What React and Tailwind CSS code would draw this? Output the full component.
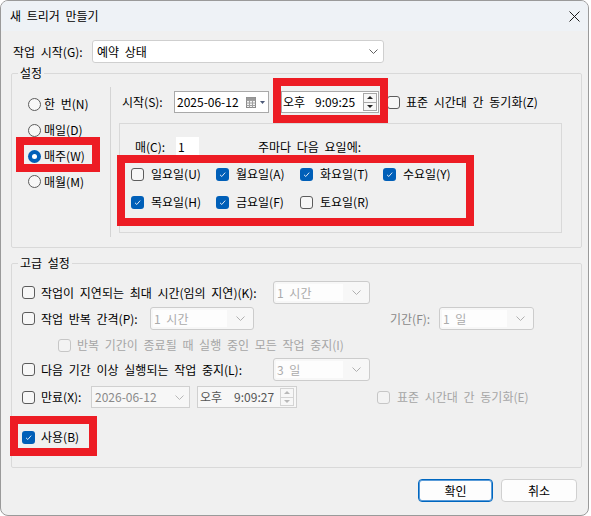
import React from "react";

function Cb({ checked, disabled }) {
  if (checked)
    return (
      <span className="w-[13px] h-[13px] rounded-[3px] bg-[#005fb8] flex items-center justify-center shrink-0">
        <svg width="9" height="9" viewBox="0 0 9 9">
          <path d="M2 4.8 L3.8 6.5 L7.2 2.6" stroke="#dfe9f5" strokeWidth="1" fill="none" />
        </svg>
      </span>
    );
  return (
    <span
      className={
        disabled
          ? "w-[13px] h-[13px] rounded-[3px] border border-[#c6c6c6] bg-[#f3f3f3] shrink-0"
          : "w-[13px] h-[13px] rounded-[3px] border border-[#5c5c5c] bg-[#f7f7f7] shrink-0"
      }
    />
  );
}

function Radio({ checked, label }) {
  return (
    <div className="flex items-center gap-[3px]">
      {checked ? (
        <span className="w-[13px] h-[13px] rounded-full bg-[#005fb8] flex items-center justify-center shrink-0">
          <span className="w-[5px] h-[5px] rounded-full bg-white" />
        </span>
      ) : (
        <span className="w-[13px] h-[13px] rounded-full border border-[#5c5c5c] bg-[#f7f7f7] shrink-0" />
      )}
      <span>{label}</span>
    </div>
  );
}

function Chevron({ color }) {
  return (
    <svg width="9" height="5" viewBox="0 0 9 5">
      <path d="M0.5 0.5 L4.5 4.5 L8.5 0.5" stroke={color} strokeWidth="1" fill="none" />
    </svg>
  );
}

function DisCombo({ className, text }) {
  return (
    <div className={"h-[23px] border border-[#cccccc] rounded-[3px] bg-[#f7f7f7] flex items-center " + className}>
      <span className="flex-1 h-[17px] ml-[2px] bg-[#fdfdfd] text-[#ababab] pl-[1px] leading-[17px]">{text}</span>
      <span className="w-[26px] flex items-center justify-center">
        <Chevron color="#b0b0b0" />
      </span>
    </div>
  );
}

function Spin({ disabled }) {
  const c = disabled ? "#b8b8b8" : "#222222";
  const b = disabled ? "border-[#d4d4d4]" : "border-[#a8a8a8]";
  return (
    <span className={"flex flex-col w-[14px] h-[18px] border " + b + " bg-[#f7f7f7]"}>
      <span className={"flex-1 flex items-center justify-center border-b " + b}>
        <svg width="6" height="3" viewBox="0 0 6 3"><path d="M0 3 L3 0 L6 3 Z" fill={c} /></svg>
      </span>
      <span className="flex-1 flex items-center justify-center">
        <svg width="6" height="3" viewBox="0 0 6 3"><path d="M0 0 L3 3 L6 0 Z" fill={c} /></svg>
      </span>
    </span>
  );
}

export default function App() {
  return (
    <div className="w-[591px] h-[516px] bg-white font-['Noto_Sans_CJK_KR',sans-serif] text-[12px] leading-[16px] text-black [word-spacing:3px]">
      <div className="w-[589px] h-[516px] border border-[#9a9a9a] rounded-[8px] overflow-hidden bg-[#f0f0f0] flex flex-col">
        {/* title bar */}
        <div className="h-[30px] shrink-0 bg-[#eef2f6] flex items-center justify-between pl-[9px] pr-[8px]">
          <span>새 트리거 만들기</span>
          <svg width="11" height="11" viewBox="0 0 11 11">
            <path d="M0.5 0.5 L10.5 10.5 M10.5 0.5 L0.5 10.5" stroke="#1a1a1a" strokeWidth="1" />
          </svg>
        </div>

        <div className="pl-[10px] flex flex-col">
          {/* start row */}
          <div className="mt-[9px] h-[23px] flex items-center">
            <span className="w-[81px] pl-[2px]">작업 시작(G):</span>
            <div className="w-[292px] h-[23px] bg-white border border-[#cfcfcf] rounded-[3px] flex items-center justify-between pl-[4px] pr-[5px]">
              <span>예약 상태</span>
              <Chevron color="#606060" />
            </div>
          </div>

          {/* settings */}
          <fieldset className="mt-[2px] w-[571px] border border-[#d9d9d9] rounded-[2px]">
            <legend className="ml-[6px] px-[2px] leading-[16px]">설정</legend>
            <div className="flex pt-[6px] pb-[10px]">
              <div className="w-[98px] pt-[4px] flex flex-col">
                <div className="h-[26px] pl-[16px] flex items-center"><Radio label="한 번(N)" /></div>
                <div className="h-[26px] pl-[16px] flex items-center"><Radio label="매일(D)" /></div>
                <div className="h-[26px] pl-[16px] flex items-center relative">
                  <Radio checked label="매주(W)" />
                  <span className="absolute left-[4px] top-[-6px] w-[84px] h-[35px] border-[8px] border-[#ed1c24] pointer-events-none" />
                </div>
                <div className="h-[25px] pl-[16px] flex items-center"><Radio label="매월(M)" /></div>
              </div>
              <div className="w-px h-[150px] bg-[#d4d4d4]" />
              <div className="flex-1 pl-[8px] flex flex-col">
                <div className="mt-[4px] h-[22px] flex items-center pl-[3px]">
                  <span className="w-[52px]">시작(S):</span>
                  <div className="w-[95px] h-[22px] bg-white border border-[#a9a9a9] flex items-center pl-[2px] pr-[2px]">
                    <span className="flex-1">2025-06-12</span>
                    <svg width="20" height="11" viewBox="0 0 20 11">
                      <rect x="0.5" y="0.5" width="9" height="10" fill="#f4f4f4" stroke="#8a8a8a" />
                      <path d="M0.5 3.5 H9.5 M0.5 6 H9.5 M0.5 8.5 H9.5 M3.5 3.5 V10.5 M6.5 3.5 V10.5" stroke="#a0a0a0" strokeWidth="1" />
                      <rect x="0.5" y="0.5" width="9" height="2.5" fill="#9a9a9a" />
                      <path d="M14 4 L19 4 L16.5 7 Z" fill="#4d5a78" />
                    </svg>
                  </div>
                  <div className="relative ml-[12px]">
                    <div className="w-[98px] h-[22px] bg-white border border-[#a9a9a9] flex items-center pl-[1px] pr-[1px]">
                      <span>오후</span>
                      <span className="ml-[10px] flex-1">9:09:25</span>
                      <Spin />
                    </div>
                    <span className="absolute left-[-8px] top-[-13px] w-[115px] h-[45px] border-[8px] border-[#ed1c24] pointer-events-none" />
                  </div>
                  <div className="ml-[8px] flex items-center gap-[6px]">
                    <Cb />
                    <span>표준 시간대 간 동기화(Z)</span>
                  </div>
                </div>

                <div className="mt-[10px] w-[443px] h-[110px] border border-[#d9d9d9] pt-[12px] flex flex-col">
                  <div className="h-[22px] flex items-center pl-[15px]">
                    <span className="w-[41px]">매(C):</span>
                    <span className="w-[23px] h-[20px] bg-white pl-[2px] leading-[20px]">1</span>
                    <span className="ml-[59px]">주마다 다음 요일에:</span>
                  </div>
                  <div className="mt-[2px] ml-[11px] relative w-fit">
                    <div className="grid grid-cols-[85px_84px_83px_80px]">
                      <div className="h-[28px] flex items-center gap-[7px]"><Cb /><span>일요일(U)</span></div>
                      <div className="h-[28px] flex items-center gap-[7px]"><Cb checked /><span>월요일(A)</span></div>
                      <div className="h-[28px] flex items-center gap-[7px]"><Cb checked /><span>화요일(T)</span></div>
                      <div className="h-[28px] flex items-center gap-[7px]"><Cb checked /><span>수요일(Y)</span></div>
                      <div className="h-[28px] flex items-center gap-[7px]"><Cb checked /><span>목요일(H)</span></div>
                      <div className="h-[28px] flex items-center gap-[7px]"><Cb checked /><span>금요일(F)</span></div>
                      <div className="h-[28px] flex items-center gap-[7px]"><Cb /><span>토요일(R)</span></div>
                    </div>
                    <span className="absolute left-[-14px] top-[-5px] w-[357px] h-[71px] border-[8px] border-[#ed1c24] pointer-events-none" />
                  </div>
                </div>
              </div>
            </div>
          </fieldset>

          {/* advanced */}
          <fieldset className="mt-[7px] w-[571px] border border-[#d9d9d9] rounded-[2px]">
            <legend className="ml-[6px] px-[2px] leading-[16px]">고급 설정</legend>
            <div className="pl-[10px] pb-[20px] flex flex-col">
              <div className="mt-[10px] h-[23px] flex items-center">
                <Cb />
                <span className="ml-[6px] w-[232px]">작업이 지연되는 최대 시간(임의 지연)(K):</span>
                <DisCombo className="w-[97px]" text="1 시간" />
              </div>
              <div className="mt-[3px] h-[23px] flex items-center">
                <Cb />
                <span className="ml-[6px] w-[109px]">작업 반복 간격(P):</span>
                <DisCombo className="w-[104px]" text="1 시간" />
                <span className="ml-[136px] w-[49px] text-[#8a8a8a]">기간(F):</span>
                <DisCombo className="w-[95px]" text="1 일" />
              </div>
              <div className="mt-[5px] h-[20px] flex items-center pl-[36px] gap-[6px]">
                <Cb disabled />
                <span className="text-[#a6a6a6]">반복 기간이 종료될 때 실행 중인 모든 작업 중지(I)</span>
              </div>
              <div className="mt-[3px] h-[23px] flex items-center">
                <Cb />
                <span className="ml-[6px] w-[232px]">다음 기간 이상 실행되는 작업 중지(L):</span>
                <DisCombo className="w-[97px]" text="3 일" />
              </div>
              <div className="mt-[5px] h-[22px] flex items-center">
                <Cb />
                <span className="ml-[6px] w-[50px]">만료(X):</span>
                <div className="w-[99px] h-[22px] border border-[#d0d0d0] bg-[#f7f7f7] flex items-center pl-[3px] pr-[5px]">
                  <span className="flex-1 text-[#8a8a8a]">2026-06-12</span>
                  <Chevron color="#b8b8b8" />
                </div>
                <div className="ml-[7px] w-[100px] h-[22px] border border-[#d0d0d0] bg-[#f7f7f7] flex items-center pl-[2px] pr-[2px]">
                  <span className="text-[#555555]">오후</span>
                  <span className="ml-[12px] flex-1 text-[#555555]">9:09:27</span>
                  <Spin disabled />
                </div>
                <div className="ml-[80px] flex items-center gap-[7px]">
                  <Cb disabled />
                  <span className="text-[#a6a6a6]">표준 시간대 간 동기화(E)</span>
                </div>
              </div>
              <div className="mt-[19px] h-[20px] flex items-center gap-[6px] relative w-fit">
                <Cb checked />
                <span>사용(B)</span>
                <span className="absolute left-[-12px] top-[-11px] w-[87px] h-[40px] border-[8px] border-[#ed1c24] pointer-events-none" />
              </div>
            </div>
          </fieldset>

          {/* buttons */}
          <div className="mt-[11px] flex justify-end gap-[8px] pr-[11px]">
            <button className="w-[75px] h-[23px] rounded-[4px] border border-[#0067c0] shadow-[inset_0_0_0_1px_#5a9bd8] bg-[#fdfdfd] text-[12px]">확인</button>
            <button className="w-[76px] h-[23px] rounded-[4px] border border-[#d0d0d0] bg-[#fdfdfd] text-[12px]">취소</button>
          </div>
        </div>
      </div>
    </div>
  );
}
